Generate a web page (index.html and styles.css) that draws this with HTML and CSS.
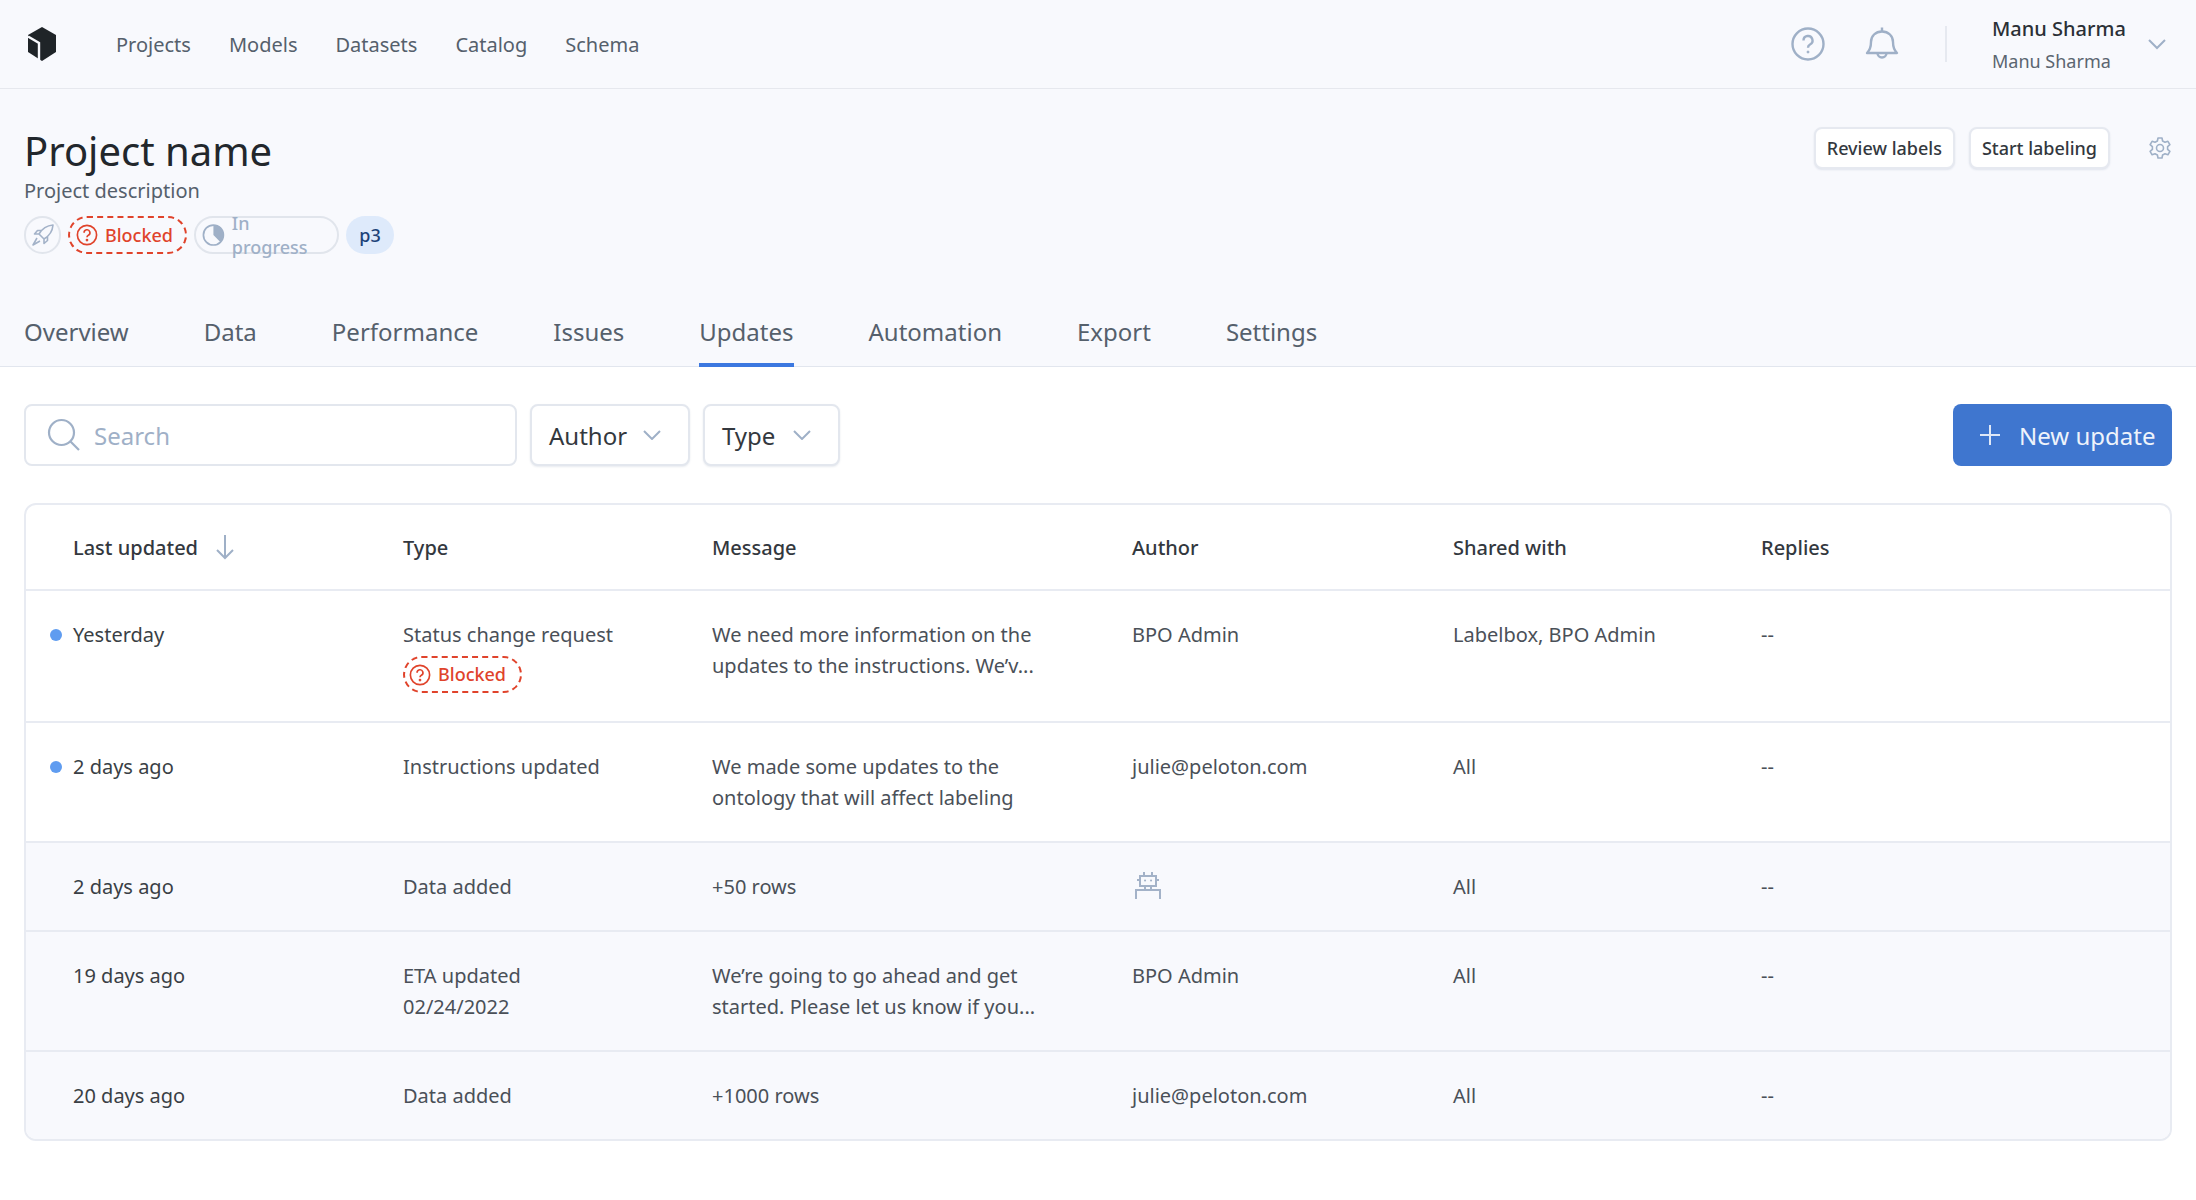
FILE: index.html
```html
<!DOCTYPE html>
<html lang="en">
<head>
    <meta charset="UTF-8">
    <title>Updates</title>
    <link rel="stylesheet" href="styles.css">
</head>
<body>
    <header class="topbar">
        <svg class="logo" width="30" height="34" viewBox="0 0 30 34"><path d="M15 0l14 8v17l-14 9-14-9V8z" fill="#1f2428"/><path d="M1 9.500l11 6.500v17" fill="none" stroke="#f8f9fd" stroke-width="2.400"/></svg>
        <nav class="mainnav">
            <a>Projects</a>
            <a>Models</a>
            <a>Datasets</a>
            <a>Catalog</a>
            <a>Schema</a>
        </nav>
        <div class="topbar-right">
            <svg width="36" height="36" viewBox="0 0 36 36" fill="none" stroke="#9fb0c7" stroke-width="2.400"><circle cx="18" cy="18" r="15.500"/><path d="M13.500 14.500a4.500 4.500 0 1 1 6.500 4c-1.500.8-2 1.600-2 3.200"/><circle cx="18" cy="26" r="1" fill="#9fb0c7" stroke-width="1"/></svg>
            <svg class="bell" width="34" height="36" viewBox="0 0 34 36" fill="none" stroke="#9fb0c7" stroke-width="2.400"><path d="M2 27c3-3 4-6 4-11 0-6 4.500-10.500 11-10.500S28 10 28 16c0 5 1 8 4 11z" stroke-linejoin="round"/><path d="M17 1.500v4M12.500 27a4.500 4.500 0 0 0 9 0"/></svg>
            <div class="divider"></div>
            <div class="user">
                <div class="user-name">Manu Sharma</div>
                <div class="user-org">Manu Sharma</div>
            </div>
            <svg width="20" height="12" viewBox="0 0 20 12" fill="none" stroke="#9fb0c7" stroke-width="2"><path d="M2 2l8 8 8-8"/></svg>
        </div>
    </header>

    <section class="project">
        <div class="project-head">
            <div>
                <h1>Project name</h1>
                <p class="desc">Project description</p>
                <div class="chips">
                    <span class="chip chip-icon">
                        <svg width="24" height="24" viewBox="0 0 24 24" fill="none" stroke="#a3b2c8" stroke-width="1.600" stroke-linejoin="round"><path d="M22 2c-6 .5-10.500 3-14 9l5 5c6-3.500 8.500-8 9-14zM8 11H3.500l3-3.500H11M13 16v4.500l3.500-3V13M6 15l-4 7 7-4"/></svg>
                    </span>
                    <span class="chip chip-blocked">
                        <svg width="24" height="24" viewBox="0 0 24 24" fill="none" stroke="#e0432b" stroke-width="1.800"><circle cx="12" cy="12" r="10.500"/><path d="M8.800 9.500a3.200 3.200 0 1 1 4.700 2.800c-1 .6-1.500 1.200-1.500 2.200"/><circle cx="12" cy="17.500" r=".6" fill="#e0432b"/></svg>
                        Blocked
                    </span>
                    <span class="chip chip-progress">
                        <svg width="24" height="24" viewBox="0 0 24 24"><circle cx="12" cy="12" r="10.500" fill="none" stroke="#9fb0c7" stroke-width="1.800"/><path d="M12 1.500A10.500 10.500 0 0 1 19.500 19.500L12 12z" fill="#9fb0c7"/></svg>
                        In progress
                    </span>
                    <span class="chip chip-tag">p3</span>
                </div>
            </div>
            <div class="project-actions">
                <button class="btn">Review labels</button>
                <button class="btn">Start labeling</button>
                <svg class="gear" width="24" height="24" viewBox="0 0 24 24" fill="none" stroke="#9fb0c7" stroke-width="1.600" stroke-linejoin="round"><circle cx="12" cy="12" r="3.500"/><path d="M10 2h4l.6 3 2.400 1.300 2.900-1 2 3.400-2.300 2 .0 2.700 2.300 2-2 3.400-2.900-1L14.600 19l-.6 3h-4l-.6-3L7 17.800l-2.900 1-2-3.400 2.300-2v-2.700l-2.300-2 2-3.400 2.900 1L9.400 5z"/></svg>
            </div>
        </div>
        <nav class="tabs">
            <a>Overview</a>
            <a>Data</a>
            <a>Performance</a>
            <a>Issues</a>
            <a class="active">Updates</a>
            <a>Automation</a>
            <a>Export</a>
            <a>Settings</a>
        </nav>
    </section>

    <main class="content">
        <div class="toolbar">
            <div class="search">
                <svg width="34" height="34" viewBox="0 0 34 34" fill="none" stroke="#9fb0c7" stroke-width="2.200"><circle cx="14.500" cy="14.500" r="12.500"/><path d="M23.500 23.500L32 32"/></svg>
                <span>Search</span>
            </div>
            <button class="select select-author">Author <svg width="18" height="10" viewBox="0 0 18 10" fill="none" stroke="#9fb0c7" stroke-width="2"><path d="M1 1l8 8 8-8"/></svg></button>
            <button class="select select-type">Type <svg width="18" height="10" viewBox="0 0 18 10" fill="none" stroke="#9fb0c7" stroke-width="2"><path d="M1 1l8 8 8-8"/></svg></button>
            <button class="btn-new">
                <svg width="20" height="20" viewBox="0 0 20 20" stroke="#dfe8f7" stroke-width="2"><path d="M10 0v20M0 10h20"/></svg>
                New update
            </button>
        </div>

        <div class="table-wrap">
            <table>
                <colgroup>
                    <col class="c-date"><col class="c-type"><col class="c-msg"><col class="c-author"><col class="c-shared"><col>
                </colgroup>
                <thead>
                    <tr>
                        <th><span class="sort">Last updated <svg width="18" height="26" viewBox="0 0 18 26" fill="none" stroke="#9fb0c7" stroke-width="2"><path d="M9 1v23M1 16l8 8 8-8"/></svg></span></th>
                        <th>Type</th>
                        <th>Message</th>
                        <th>Author</th>
                        <th>Shared with</th>
                        <th>Replies</th>
                    </tr>
                </thead>
                <tbody>
                    <tr class="unread">
                        <td class="date"><i class="dot"></i>Yesterday</td>
                        <td>Status change request
                            <div class="row-chip"><span class="chip chip-blocked chip-small">
                                <svg width="22" height="22" viewBox="0 0 24 24" fill="none" stroke="#e0432b" stroke-width="1.800"><circle cx="12" cy="12" r="10.500"/><path d="M8.800 9.500a3.200 3.200 0 1 1 4.700 2.800c-1 .6-1.500 1.200-1.500 2.200"/><circle cx="12" cy="17.500" r=".6" fill="#e0432b"/></svg>
                                Blocked
                            </span></div>
                        </td>
                        <td>We need more information on the<br>updates to the instructions. We’v...</td>
                        <td>BPO Admin</td>
                        <td>Labelbox, BPO Admin</td>
                        <td>--</td>
                    </tr>
                    <tr class="unread">
                        <td class="date"><i class="dot"></i>2 days ago</td>
                        <td>Instructions updated</td>
                        <td>We made some updates to the<br>ontology that will affect labeling</td>
                        <td>julie@peloton.com</td>
                        <td>All</td>
                        <td>--</td>
                    </tr>
                    <tr>
                        <td class="date">2 days ago</td>
                        <td>Data added</td>
                        <td>+50 rows</td>
                        <td><svg class="robot" width="26" height="28" viewBox="0 0 26 28" fill="none" stroke="#a3b2c8" stroke-width="2"><path d="M9 1v4M17 1v4M5 5h16v10H5zM2 9h3M21 9h3M10 15v4M16 15v4M1 28v-9h24v9"/><path d="M10 9.500h.1M16 9.500h.1" stroke-linecap="round"/></svg></td>
                        <td>All</td>
                        <td>--</td>
                    </tr>
                    <tr>
                        <td class="date">19 days ago</td>
                        <td>ETA updated<br>02/24/2022</td>
                        <td>We’re going to go ahead and get<br>started. Please let us know if you...</td>
                        <td>BPO Admin</td>
                        <td>All</td>
                        <td>--</td>
                    </tr>
                    <tr>
                        <td class="date">20 days ago</td>
                        <td>Data added</td>
                        <td>+1000 rows</td>
                        <td>julie@peloton.com</td>
                        <td>All</td>
                        <td>--</td>
                    </tr>
                </tbody>
            </table>
        </div>
    </main>
</body>
</html>
```

FILE: styles.css
```css
* {
    box-sizing: border-box;
}
body {
    margin: 0;
    font-family: "Noto Sans", Arial, sans-serif;
    font-size: 20px;
    color: #3a3f45;
    background: #fff;
}
button {
    font-family: inherit;
}

.topbar {
    display: flex;
    align-items: center;
    height: 89px;
    padding: 0 29px 0 27px;
    background: #f8f9fd;
    border-bottom: 1px solid #e6e8ee;
}
.logo {
    flex: none;
}
.mainnav {
    display: flex;
    gap: 38px;
    margin-left: 59px;
    color: #55606c;
}
.topbar-right {
    display: flex;
    align-items: center;
    margin-left: auto;
}
.bell {
    margin-left: 39px;
}
.divider {
    width: 2px;
    height: 36px;
    margin: 0 45px 0 46px;
    background: #e6e9f0;
}
.user {
    width: 155px;
}
.user-name {
    font-weight: 500;
    color: #2b3036;
    line-height: 28px;
}
.user-org {
    margin-top: 6px;
    font-size: 18px;
    color: #5b6570;
    line-height: 24px;
}

.project {
    height: 278px;
    padding: 0 24px;
    background: #f8f9fd;
    border-bottom: 1px solid #e2e6ee;
}
.project-head {
    display: flex;
    justify-content: space-between;
    height: 213px;
    padding-top: 38px;
}
h1 {
    margin: 0;
    font-size: 40px;
    font-weight: 400;
    line-height: 48px;
    color: #22272c;
}
.desc {
    margin: 2px 0 0;
    line-height: 28px;
    color: #55606c;
}
.chips {
    display: flex;
    gap: 7px;
    margin-top: 11px;
}
.chip {
    display: inline-flex;
    align-items: center;
    gap: 7px;
    height: 38px;
    padding: 0 12px 0 6px;
    border: 2px solid #e1e5ec;
    border-radius: 19px;
    font-size: 18px;
    font-weight: 500;
}
.chip-icon {
    width: 37px;
    padding: 0;
    justify-content: center;
}
.chip-blocked {
    width: 119px;
    border: 2px dashed #e0432b;
    color: #e0432b;
}
.chip-progress {
    width: 145px;
    color: #9fb0c7;
}
.chip-tag {
    width: 48px;
    padding: 0;
    justify-content: center;
    border: 0;
    background: #deeafb;
    color: #1d4379;
}
.project-actions {
    display: flex;
    align-items: flex-start;
    gap: 14px;
    padding-top: 0;
}
.btn {
    height: 42px;
    padding: 0 11px;
    background: #fff;
    border: 2px solid #e6e9f0;
    border-radius: 8px;
    font-size: 18px;
    font-weight: 500;
    color: #33383e;
    box-shadow: 0 1px 2px rgba(60, 80, 120, 0.12);
}
.gear {
    margin: 9px 0 0 24px;
}
.tabs {
    display: flex;
    gap: 75px;
    font-size: 24px;
    color: #55606c;
}
.tabs a {
    height: 65px;
    padding-top: 14px;
    line-height: 32px;
}
.tabs .active {
    border-bottom: 4px solid #3c78e0;
}

.content {
    padding: 37px 24px 0;
}
.toolbar {
    display: flex;
    gap: 13px;
    height: 62px;
}
.search {
    display: flex;
    align-items: center;
    gap: 13px;
    width: 493px;
    padding-left: 21px;
    border: 2px solid #e3e7ee;
    border-radius: 8px;
    font-size: 24px;
    color: #9fb0c7;
}
.select {
    display: flex;
    align-items: center;
    justify-content: space-between;
    padding: 0 27px 0 17px;
    background: #fff;
    border: 2px solid #e3e7ee;
    border-radius: 8px;
    font-size: 24px;
    color: #33383e;
    box-shadow: 0 1px 2px rgba(60, 80, 120, 0.12);
}
.select-author {
    width: 160px;
}
.select-type {
    width: 137px;
}
.btn-new {
    display: flex;
    align-items: center;
    gap: 19px;
    width: 219px;
    margin-left: auto;
    padding-left: 27px;
    background: #3f76cf;
    border: 0;
    border-radius: 8px;
    font-size: 24px;
    color: #eef3fb;
}

.table-wrap {
    margin-top: 37px;
    border: 2px solid #e8ebf2;
    border-radius: 12px;
    overflow: hidden;
}
table {
    width: 100%;
    border-collapse: collapse;
    table-layout: fixed;
}
.c-date {
    width: 377px;
}
.c-type {
    width: 309px;
}
.c-msg {
    width: 420px;
}
.c-author {
    width: 321px;
}
.c-shared {
    width: 308px;
}
th {
    height: 85px;
    padding: 0 0 0 0;
    font-weight: 500;
    text-align: left;
    color: #33383e;
}
th:first-child, td:first-child {
    padding-left: 47px;
}
.sort {
    display: inline-flex;
    align-items: center;
    gap: 18px;
}
td {
    padding: 28px 0 28px;
    line-height: 31px;
    vertical-align: top;
    border-top: 2px solid #e8ebf2;
    color: #4a5058;
    background: #f8f9fd;
}
.unread td {
    background: #fff;
}
td.date {
    position: relative;
    color: #3a3f45;
}
.dot {
    position: absolute;
    left: 24px;
    top: 38px;
    width: 12px;
    height: 12px;
    border-radius: 50%;
    background: #5f9cf0;
}
.row-chip {
    display: flex;
    margin-top: 6px;
}
.chip-small {
    height: 37px;
    padding: 0 10px 0 4px;
}
.robot {
    display: block;
    margin-left: 3px;
}
```
